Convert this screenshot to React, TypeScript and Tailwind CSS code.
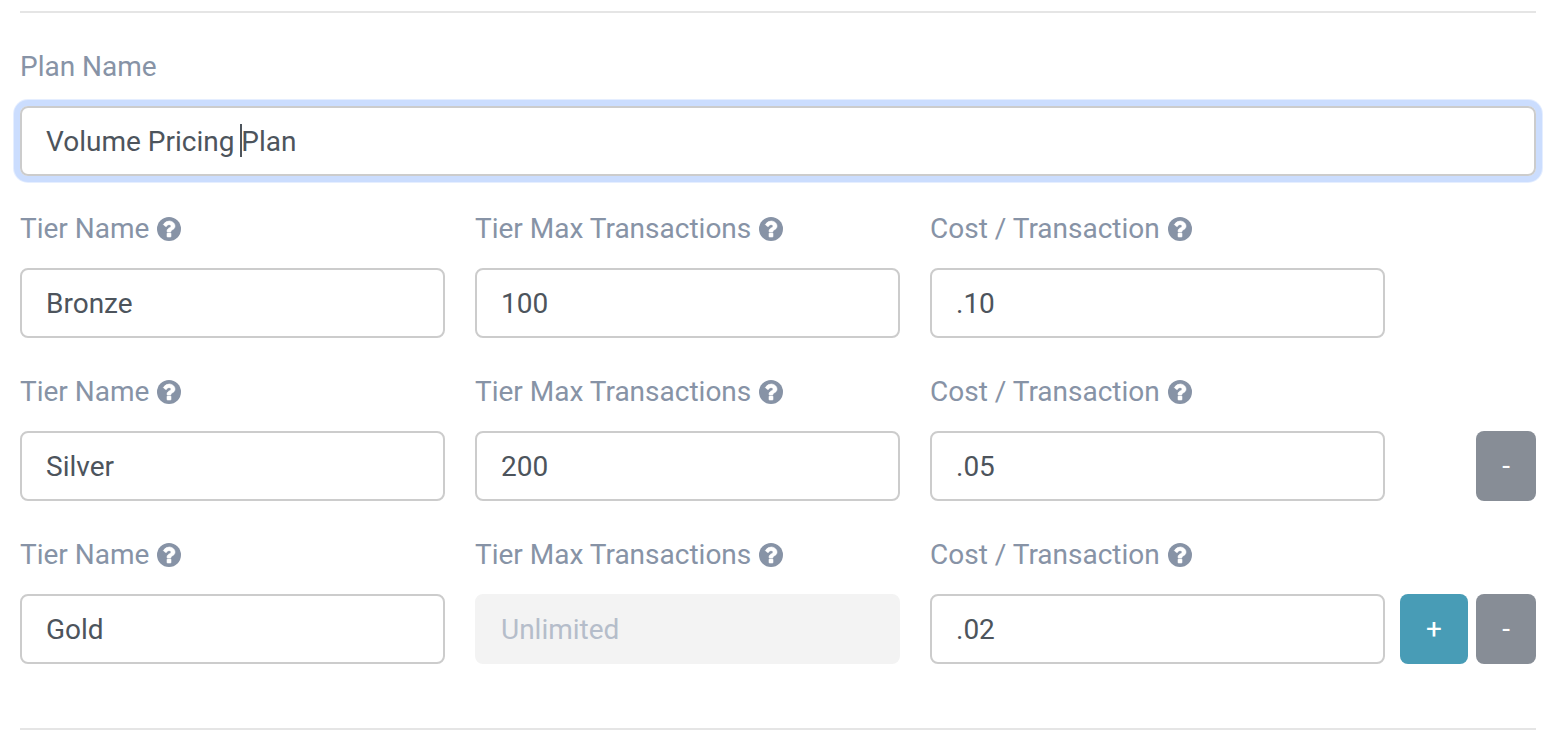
import React, { useState } from 'react';

interface Tier {
  id: number;
  name: string;
  max: string;
  cost: string;
}

const initialTiers: Tier[] = [
  { id: 1, name: 'Bronze', max: '100', cost: '.10' },
  { id: 2, name: 'Silver', max: '200', cost: '.05' },
  { id: 3, name: 'Gold', max: '', cost: '.02' },
];

const inputClass =
  'block w-full h-[70px] rounded-lg border-2 border-[#cccccc] bg-white px-6 text-[28px] text-[#4d545c] outline-none disabled:border-[#f3f3f3] disabled:bg-[#f3f3f3] placeholder:text-[#b5bdca]';

const HelpIcon: React.FC = () => (
  <svg viewBox="0 0 1536 1536" className="size-6 shrink-0" fill="currentColor" aria-hidden="true">
    <circle cx="768" cy="768" r="768" />
    <path
      className="fill-white stroke-white"
      strokeWidth="36"
      d="M896 1248v-192q0-14-9-23t-23-9h-192q-14 0-23 9t-9 23v192q0 14 9 23t23 9h192q14 0 23-9t9-23zm256-672q0-88-55.5-163t-138.5-116-170-41q-243 0-371 213-15 24 8 42l132 100q7 6 19 6 16 0 25-12 53-68 86-92 34-24 86-24 48 0 85.5 26t37.5 59q0 38-20 61t-68 45q-63 28-115.5 86.5t-52.5 125.5v36q0 14 9 23t23 9h192q14 0 23-9t9-23q0-19 21.5-49.5t54.5-49.5q32-18 49-28.5t46-35 44.5-48 28-60.5 12.5-81z"
    />
  </svg>
);

interface FieldProps {
  id: string;
  label: string;
  value: string;
  placeholder?: string;
  disabled?: boolean;
  onChange: (value: string) => void;
}

const TierField: React.FC<FieldProps> = ({ id, label, value, placeholder, disabled, onChange }) => (
  <div className="min-w-0">
    <label htmlFor={id} className="mb-[18px] flex items-center gap-2 whitespace-nowrap">
      {label}
      <HelpIcon />
    </label>
    <input
      id={id}
      type="text"
      className={inputClass}
      value={value}
      placeholder={placeholder}
      disabled={disabled}
      onChange={(e) => onChange(e.target.value)}
    />
  </div>
);

export default function App() {
  const [planName, setPlanName] = useState('Volume Pricing Plan');
  const [tiers, setTiers] = useState(initialTiers);

  const update = (id: number, patch: Partial<Tier>) =>
    setTiers(tiers.map((tier) => (tier.id === id ? { ...tier, ...patch } : tier)));

  const addTier = () => setTiers([...tiers, { id: Date.now(), name: '', max: '', cost: '' }]);

  const removeTier = (id: number) => setTiers(tiers.filter((tier) => tier.id !== id));

  return (
    <form
      className="bg-white pl-5 pr-7 pt-[11px] font-[Roboto,sans-serif] text-[28px] leading-[42px] text-[#8793a6]"
      onSubmit={(e) => e.preventDefault()}
    >
      <hr className="border-t-2 border-[#e5e5e5]" />

      <div className="mb-8 mt-[33px]">
        <label htmlFor="plan-name" className="mb-[18px] block">
          Plan Name
        </label>
        <div className="relative rounded-lg shadow-[0_0_0_6px_#cbddfe,0_0_0_7px_#e5eeff]">
          <input
            id="plan-name"
            type="text"
            className={`${inputClass} caret-transparent`}
            value={planName}
            onChange={(e) => setPlanName(e.target.value)}
          />
          {/* Text cursor */}
          <span className="pointer-events-none absolute left-[220px] top-[18px] h-[33px] w-0.5 bg-[#4d545c]" />
        </div>
      </div>

      <div className="flex flex-col gap-[33px]">
        {tiers.map((tier, index) => {
          const isLast = index === tiers.length - 1;
          return (
            <div key={tier.id} className="flex items-end gap-[15px]">
              <div className="grid flex-1 grid-cols-[425fr_425fr_455fr] gap-[30px]">
                <TierField
                  id={`name-${tier.id}`}
                  label="Tier Name"
                  value={tier.name}
                  onChange={(name) => update(tier.id, { name })}
                />
                <TierField
                  id={`max-${tier.id}`}
                  label="Tier Max Transactions"
                  value={isLast ? '' : tier.max}
                  placeholder={isLast ? 'Unlimited' : undefined}
                  disabled={isLast}
                  onChange={(max) => update(tier.id, { max })}
                />
                <TierField
                  id={`cost-${tier.id}`}
                  label="Cost / Transaction"
                  value={tier.cost}
                  onChange={(cost) => update(tier.id, { cost })}
                />
              </div>
              <div className="flex w-[136px] justify-end gap-2 text-white">
                {isLast && (
                  <button type="button" className="h-[70px] w-[68px] rounded-lg bg-[#489cb6]" onClick={addTier}>
                    +
                  </button>
                )}
                {index > 0 && (
                  <button
                    type="button"
                    className="h-[70px] w-[60px] rounded-lg bg-[#878d96]"
                    onClick={() => removeTier(tier.id)}
                  >
                    -
                  </button>
                )}
              </div>
            </div>
          );
        })}
      </div>

      <hr className="mt-16 border-t-2 border-[#e5e5e5]" />
    </form>
  );
}
